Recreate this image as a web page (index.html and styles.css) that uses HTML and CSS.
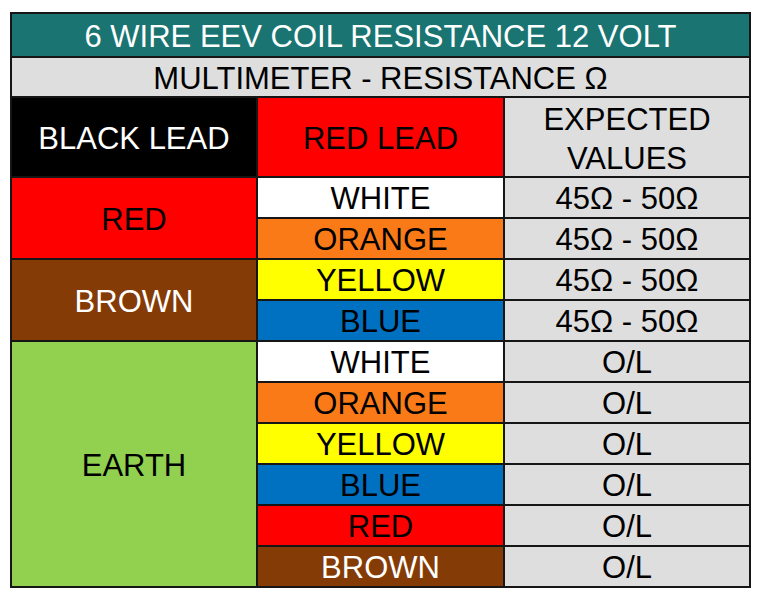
FILE: index.html
```html
<!DOCTYPE html>
<html>
<head>
<meta charset="utf-8">
<link rel="stylesheet" href="styles.css">
</head>
<body>
<div class="sheet">
  <div class="cell title span3">6 WIRE EEV COIL RESISTANCE 12 VOLT</div>
  <div class="cell grey span3">MULTIMETER - RESISTANCE Ω</div>
  <div class="cell black">BLACK LEAD</div>
  <div class="cell red">RED LEAD</div>
  <div class="cell grey twoline">EXPECTED<br>VALUES</div>

  <div class="cell red r2">RED</div>
  <div class="cell white">WHITE</div>
  <div class="cell grey">45Ω - 50Ω</div>
  <div class="cell orange">ORANGE</div>
  <div class="cell grey">45Ω - 50Ω</div>

  <div class="cell brown r2">BROWN</div>
  <div class="cell yellow">YELLOW</div>
  <div class="cell grey">45Ω - 50Ω</div>
  <div class="cell blue">BLUE</div>
  <div class="cell grey">45Ω - 50Ω</div>

  <div class="cell green r6">EARTH</div>
  <div class="cell white">WHITE</div>
  <div class="cell grey">O/L</div>
  <div class="cell orange">ORANGE</div>
  <div class="cell grey">O/L</div>
  <div class="cell yellow">YELLOW</div>
  <div class="cell grey">O/L</div>
  <div class="cell blue">BLUE</div>
  <div class="cell grey">O/L</div>
  <div class="cell red">RED</div>
  <div class="cell grey">O/L</div>
  <div class="cell brown">BROWN</div>
  <div class="cell grey">O/L</div>
</div>
</body>
</html>
```

FILE: styles.css
```css
html, body {
  margin: 0;
  padding: 0;
  background: #ffffff;
}
body {
  padding: 12px 0 0 10px;
}
.sheet {
  width: 737px;
  display: grid;
  grid-template-columns: 244px 245px 244px;
  grid-template-rows: 42px 38px 78px repeat(10, 39px);
  gap: 2px;
  background: #161616;
  border: 2px solid #161616;
  font-family: "Liberation Sans", Arial, sans-serif;
  font-size: 31px;
  color: #000;
}
.cell {
  display: flex;
  align-items: center;
  justify-content: center;
  text-align: center;
  line-height: 1;
  white-space: nowrap;
  padding-top: 2px;
}
.span3 { grid-column: 1 / 4; }
.r2 { grid-row: span 2; }
.r6 { grid-row: span 6; }
.twoline { line-height: 39px; padding-top: 4px; }
.title { background: #1a7472; color: #fff; }
.grey { background: #dedede; }
.black { background: #000; color: #fff; }
.red { background: #ff0000; }
.white { background: #ffffff; }
.orange { background: #fb7a18; }
.yellow { background: #ffff00; }
.blue { background: #0070c0; }
.brown { background: #843b06; color: #fff; }
.green { background: #92d050; }
```
